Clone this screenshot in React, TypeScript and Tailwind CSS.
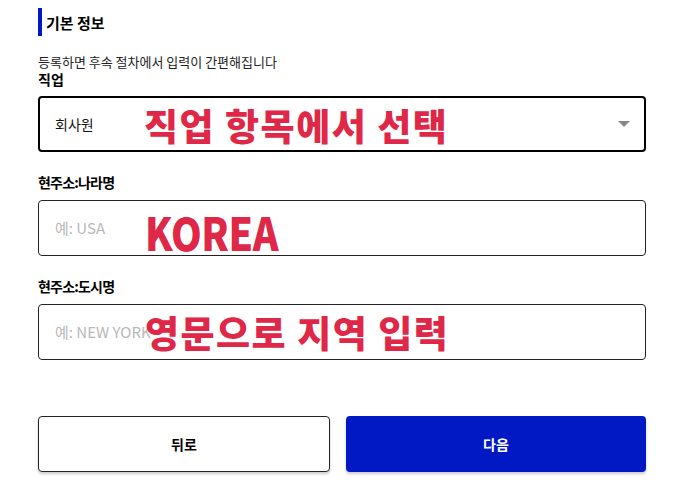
import React from "react";

const font = { fontFamily: '"Noto Sans CJK KR", "Noto Sans", sans-serif' };

function Note({ children, className }: { children: React.ReactNode; className: string }) {
  return (
    <span
      className={`absolute whitespace-nowrap font-black text-[#df2747] leading-none pointer-events-none ${className}`}
    >
      {children}
    </span>
  );
}

export default function App() {
  return (
    <div className="w-[688px] h-[482px] bg-white overflow-hidden pl-[38px] pr-[42px] pt-2" style={font}>
      <div className="flex items-center h-[28px] border-l-[4px] border-[#0019c4] pl-[4px]">
        <h2 className="text-[15px] font-bold text-black leading-none">기본 정보</h2>
      </div>

      <p className="mt-[17px] text-[13px] text-[#222] leading-[18px]">등록하면 후속 절차에서 입력이 간편해집니다</p>
      <label className="block text-[14px] font-bold text-black leading-[18px] -mt-[1px]">직업</label>

      <div className="relative mt-[8px] h-[56px] border-2 border-black rounded-[4px] flex items-center pl-[15px] pr-[14px]">
        <span className="text-[14px] text-[#111]">회사원</span>
        <span className="ml-auto w-0 h-0 border-l-[6px] border-r-[6px] border-t-[6px] border-l-transparent border-r-transparent border-t-[#8a8a8a]" />
        <Note className="left-[104px] top-[9px] text-[37px] tracking-[1.5px]">직업 항목에서 선택</Note>
      </div>

      <label className="block mt-[20px] text-[14px] font-bold text-black leading-[20px] tracking-[-0.8px]">현주소:나라명</label>
      <div className="relative mt-[8px] h-[56px] border border-[#222] rounded-[4px] flex items-center pl-[16px]">
        <span className="text-[15px] text-[#b8b8b8]">예: USA</span>
        <Note className="left-[106px] top-[8px] text-[45px] tracking-[-0.5px] scale-x-[0.87] origin-left">KOREA</Note>
      </div>

      <label className="block mt-[20px] text-[14px] font-bold text-black leading-[20px] tracking-[-0.8px]">현주소:도시명</label>
      <div className="relative mt-[8px] h-[56px] border border-[#222] rounded-[4px] flex items-center pl-[16px]">
        <span className="text-[15px] text-[#b8b8b8]">예: NEW YORK</span>
        <Note className="left-[106px] top-[9px] text-[37px] tracking-[1.5px]">영문으로 지역 입력</Note>
      </div>

      <div className="mt-[56px] flex gap-[16px]">
        <button className="w-[292px] h-[56px] border border-[#222] rounded-[4px] bg-white text-[14px] font-bold text-black shadow-[0_2px_3px_rgba(0,0,0,0.2)]">
          뒤로
        </button>
        <button className="flex-1 h-[56px] rounded-[4px] bg-[#0019c4] text-[14px] font-bold text-white shadow-[0_2px_3px_rgba(0,0,0,0.2)]">
          다음
        </button>
      </div>
    </div>
  );
}
